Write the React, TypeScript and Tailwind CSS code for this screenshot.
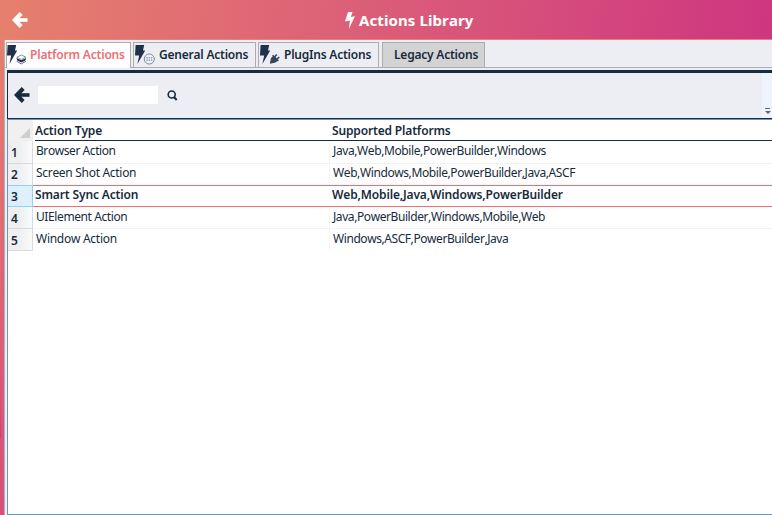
import React from "react";

const rows = [
  { name: "Browser Action", platforms: "Java,Web,Mobile,PowerBuilder,Windows", height: "h-[23px]", line: "leading-[20px]", track: "tracking-[-0.43px]", ptrack: "tracking-[-0.4px]" },
  { name: "Screen Shot Action", platforms: "Web,Windows,Mobile,PowerBuilder,Java,ASCF", height: "h-[22px]", line: "leading-[18px]", track: "tracking-[-0.3px]", ptrack: "tracking-[-0.4px]" },
  { name: "Smart Sync Action", platforms: "Web,Mobile,Java,Windows,PowerBuilder", height: "h-[21px]", line: "leading-[18px]", track: "tracking-[-0.14px]", ptrack: "tracking-[-0.14px]" },
  { name: "UIElement Action", platforms: "Java,PowerBuilder,Windows,Mobile,Web", height: "h-[22px]", line: "leading-[20px]", track: "tracking-[-0.4px]", ptrack: "tracking-[-0.42px]" },
  { name: "Window Action", platforms: "Windows,ASCF,PowerBuilder,Java", height: "h-[22px]", line: "leading-[20px]", track: "tracking-[-0.27px]", ptrack: "tracking-[-0.43px]" },
];

function BackArrow({ className }: { className: string }) {
  return (
    <svg width="16" height="16" viewBox="0 0 16 16" fill="none" stroke="currentColor" strokeWidth="4" className={className}>
      <path d="M9.2 1.5 2.8 8 9.2 14.5" />
      <path d="M3 8h12.5" strokeWidth="3.6" />
    </svg>
  );
}

function TabIcon({ kind }: { kind: "layers" | "general" | "plug" }) {
  return (
    <svg width="20" height="20" viewBox="0 0 20 20" className="shrink-0 text-[#20304d]">
      <path fill="currentColor" d="M.6 0H9.2L8 5.5H10.2L2.4 19L4.2 10.6H0Z" />
      {kind === "layers" && (
        <g>
          <path d="M9.8 12.2 14.3 10 18.8 12.2 14.3 14.5Z" fill="white" stroke="#68758c" strokeWidth=".8" />
          <path d="M9.4 13 14.3 15.2 19.2 13 18.4 15.5 14.3 17.6 10.2 15.5Z" fill="currentColor" />
          <path d="M9.6 16.2 14.3 18.9 19 16.2" fill="none" stroke="#68758c" strokeWidth="1" />
        </g>
      )}
      {kind === "general" && (
        <g fill="none" stroke="#7d899d">
          <circle cx="14.3" cy="14" r="5" fill="#f2f3f6" />
          <path d="M11.2 12.5h1.6m.7 0h1.6m.7 0h1.6M11.2 15.5h1.6m.7 0h1.6m.7 0h1.6M12 12.5v3m2.3-3v3m2.3-3v3" strokeWidth=".6" />
        </g>
      )}
      {kind === "plug" && (
        <g>
          <path d="M9.8 18.8 11 13 13.6 10.8 18 15.2 15.6 17.4Z" fill="#35435c" />
          <path d="m14.6 12 2.2-2.6M16.7 14.3l2.6-2.2M12.6 10.2l5.8 5.8" stroke="#35435c" strokeWidth="1.5" />
        </g>
      )}
    </svg>
  );
}

export default function App() {
  return (
    <div className="flex h-[515px] w-[772px] flex-col overflow-hidden font-['Noto_Sans','Open_Sans',sans-serif] text-[12px] text-[#172b3c] [font-kerning:none]">
      <header className="flex h-[40px] shrink-0 items-center border-b border-[#e98075] bg-[linear-gradient(95deg,#e6806d_0%,#da5b79_52%,#ce3680_100%)] text-white">
        <BackArrow className="ml-[12px]" />
        <svg width="10" height="17" viewBox="0 0 10 17" className="ml-[317px] mt-px" fill="currentColor">
          <path d="M3 0h4.5L5.8 5 10 4.2 3.8 17 4.9 8.4 0 9.5Z" />
        </svg>
        <h1 className="ml-1 whitespace-nowrap text-[15px] leading-5 font-bold tracking-[0.1px]">Actions Library</h1>
      </header>
      <div className="flex min-h-0 flex-1 bg-[linear-gradient(180deg,#e67f6e_0%,#dc6477_50%,#d65079_100%)]">
        <div className="flex w-1 shrink-0">
          <div className="h-[398px] w-px bg-[linear-gradient(180deg,#e67f6e_0%,#e06a74_60%,#d8527d_90%,#ce3a86_100%)]" />
        </div>
        <div className="flex min-w-0 flex-1 flex-col border-l border-[#b2b2b4] bg-[#edeef3]">
          <div className="h-[2px] shrink-0" />
          <nav className="flex h-[26px] shrink-0 border-b border-[#adadaf] pl-px font-semibold whitespace-nowrap">
            <div className="mb-[-1px] flex w-[125px] items-start border border-b-0 border-[#adadaf] bg-white pt-[2px] text-[#ee6e73]">
              <TabIcon kind="layers" />
              <span className="ml-[3px] leading-[20px] tracking-[-0.18px]">Platform Actions</span>
            </div>
            <div className="ml-[2px] flex w-[123px] items-start border border-b-0 border-[#adadaf] pt-[2px] pl-px">
              <TabIcon kind="general" />
              <span className="ml-[4px] leading-[20px] tracking-[-0.22px]">General Actions</span>
            </div>
            <div className="ml-[2px] flex w-[121px] items-start border border-b-0 border-[#adadaf] pt-[2px] pl-px">
              <TabIcon kind="plug" />
              <span className="ml-[4px] leading-[20px] tracking-[-0.22px]">PlugIns Actions</span>
            </div>
            <div className="ml-[3px] w-[103px] border border-b-0 border-[#adadaf] bg-[#d3d3d4] pt-[2px] pl-[11px]">
              <span className="block leading-[20px] tracking-[-0.22px]">Legacy Actions</span>
            </div>
          </nav>
          <main className="mt-[2px] ml-[2px] flex min-h-0 flex-1 flex-col">
            <div className="flex h-[49px] shrink-0 items-start border-t-[3px] border-b border-l border-[#172b3c]">
              <BackArrow className="mt-[14px] ml-[6px]" />
              <input aria-label="Search" className="mt-[13px] ml-[8px] h-[18px] w-[120px] bg-white outline-none" />
              <svg width="11" height="11" viewBox="0 0 11 11" className="mt-[17px] ml-[9px]" fill="none" stroke="currentColor" strokeWidth="1.6">
                <circle cx="4.7" cy="4.5" r="3.5" />
                <path d="m7 7 2.7 3" strokeWidth="2" />
              </svg>
              <div className="ml-auto flex h-[45px] w-[10px] items-end bg-[#edf4fd] pb-[3px] pl-[3px]">
                <svg width="6" height="7" viewBox="0 0 6 7" fill="#626770"><path d="M0 0h5v1H0ZM0 3h6L3 6Z" /></svg>
              </div>
            </div>
            <section className="min-h-0 flex-1 border-y border-l border-[#7195bb] bg-white">
              <div className="flex h-[21px]">
                <div className="flex w-[25px] items-end justify-end bg-[#f0f0f0] pr-[3px] pb-[3px]">
                  <svg width="10" height="10"><path d="M10 0v10H0Z" fill="#cecece" /></svg>
                </div>
                <div className="ml-[2px] flex flex-1 border-b border-[#172b3c] font-semibold">
                  <span className="w-[297px] leading-[21px] tracking-[-0.12px]">Action Type</span>
                  <span className="leading-[21px] tracking-[-0.16px]">Supported Platforms</span>
                </div>
              </div>
              {rows.map((row, i) => {
                const active = i === 2;
                const numberLine = i === 0 || i > 2 ? "leading-[23px]" : "leading-[21px]";
                return (
                  <div key={row.name} className={`flex ${row.height}`}>
                    <div className={`flex w-[25px] shrink-0 border-r border-b font-semibold ${active ? "border-[#8ed3f6]" : i === 1 ? "border-r-[#d9dadd] border-b-[#8ed3f6]" : "border-[#d9dadd]"}`}>
                      <span className={`w-[10px] pl-[3px] ${numberLine} ${active ? "bg-[#dceefa]" : "bg-[#efeff0]"}`}>{i + 1}</span>
                      <span className={`flex-1 ${active ? "bg-[#dff0fb]" : "bg-[linear-gradient(90deg,#eceef1,#f9fafb)]"}`} />
                    </div>
                    <div className={`flex flex-1 border-b whitespace-nowrap ${active || i === 1 ? "border-b-[#ee6e73]" : i === 4 ? "border-transparent" : "border-[#f3f3f4]"} ${active ? "pl-[2px] font-semibold" : "pl-[3px]"}`}>
                      <span className={`shrink-0 ${row.line} ${active ? "w-[297px]" : "w-[294px] border-r border-[#f5f5f6]"} ${row.track}`}>{row.name}</span>
                      <span className={`${row.line} ${active ? "" : "ml-[3px]"} ${row.ptrack}`}>{row.platforms}</span>
                    </div>
                  </div>
                );
              })}
            </section>
          </main>
        </div>
      </div>
    </div>
  );
}
